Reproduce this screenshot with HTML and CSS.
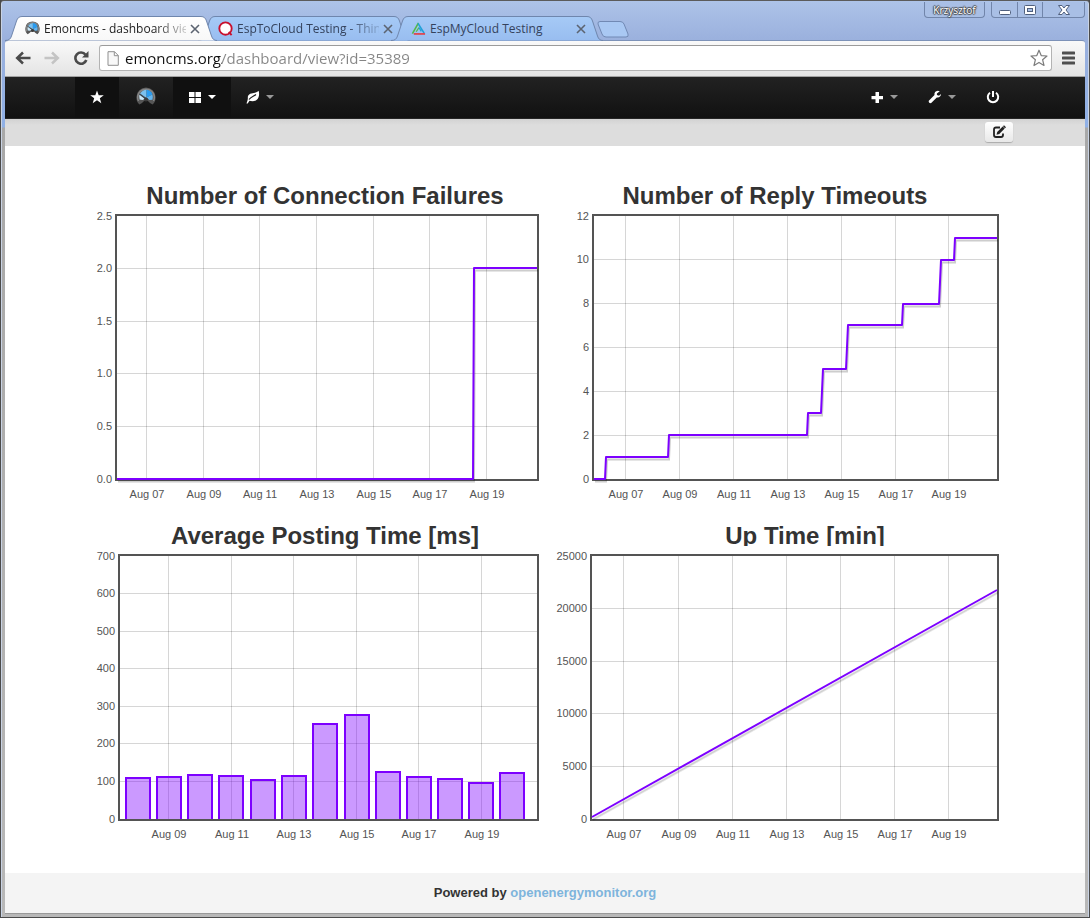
FILE: index.html
```html
<!DOCTYPE html>
<html lang="en">
<head>
<meta charset="utf-8">
<title>Emoncms - dashboard view</title>
<link rel="stylesheet" href="styles.css">
<script src="charts.js" defer></script>
</head>
<body>
<svg class="defs" aria-hidden="true">
  <defs>
    <linearGradient id="tab-on" x1="0" y1="0" x2="0" y2="1"><stop offset="0" stop-color="#fff"/><stop offset="1" stop-color="#f8f8f8"/></linearGradient>
    <linearGradient id="tab-off" x1="0" y1="0" x2="0" y2="1"><stop offset="0" stop-color="#a6caf6"/><stop offset="1" stop-color="#98bdf0"/></linearGradient>
    <symbol id="logo" viewBox="0 0 20 20">
      <path d="M3.500 17.500Q0 14.500 .500 9.500A9.500 9 0 0 1 19.500 9.500Q20 14.500 16.500 17.500L14 16Q12.500 13.500 10 13.500Q7.500 13.500 6 16Z" fill="#555"/>
      <path d="M2.500 14A8.300 8.300 0 1 1 17.500 14" fill="none" stroke="#858585" stroke-width="1.500"/>
      <path d="M3.600 12.500A7 7 0 0 1 4 6.500L9.500 11.500L6.500 13Z" fill="#c8e6f7"/>
      <path d="M4 6.500Q6.500 3 10.500 2.800L10.500 11Z" fill="#7cc1ef"/>
      <path d="M10.500 2.800Q15 3.200 16.500 7.500L10.500 10.500Z" fill="#2a9cf0"/>
      <path d="M16.500 7.500Q17.200 10 16.500 12.800L13.500 13L10.500 10.500Z" fill="#63b4ee"/>
      <path d="M3.500 7L10 12" stroke="#303a44" stroke-width="1.100"/>
      <circle cx="10" cy="12.500" r="2" fill="#3a3a3a"/>
    </symbol>
    <symbol id="caret" viewBox="0 0 8 4"><path d="M0 0h8L4 4Z" fill="currentColor"/></symbol>
    <symbol id="close" viewBox="0 0 10 10"><path d="M1 1l8 8M9 1L1 9" stroke="currentColor" stroke-width="1.600" fill="none"/></symbol>
    <symbol id="tab-shape" viewBox="0 0 212 25">
      <path d="M0 24.500C4 24.500 5.500 23 6.500 20L11.500 5C12.500 2 14 .5 17 .5H196C199 .5 200.500 2 201.500 5L206.500 20C207.500 23 209 24.500 212 24.500" stroke="#6f86ad"/>
    </symbol>
  </defs>
</svg>

<div class="window">
  <header class="titlebar">
    <nav class="tabs" aria-label="Open tabs">
      <div class="tab tab-active">
        <svg class="tab-bg" fill="url(#tab-on)"><use href="#tab-shape"/></svg>
        <svg class="favicon"><use href="#logo"/></svg>
        <span class="tab-title tab-fade">Emoncms - dashboard view</span>
        <button class="tab-close" aria-label="Close tab"><svg><use href="#close"/></svg></button>
      </div>
      <div class="tab">
        <svg class="tab-bg" fill="url(#tab-off)"><use href="#tab-shape"/></svg>
        <svg class="favicon" viewBox="0 0 16 16"><circle cx="8" cy="8" r="6.600" fill="#fff" stroke="#c8102e" stroke-width="2"/><path d="M11.500 11.500l3 3.500" stroke="#c8102e" stroke-width="2"/></svg>
        <span class="tab-title tab-fade">EspToCloud Testing - Thin</span>
        <button class="tab-close" aria-label="Close tab"><svg><use href="#close"/></svg></button>
      </div>
      <div class="tab">
        <svg class="tab-bg" fill="url(#tab-off)"><use href="#tab-shape"/></svg>
        <svg class="favicon" viewBox="0 0 16 16" fill="none" stroke-width="1.700"><path d="M8 2L1.500 13.500" stroke="#54b848"/><path d="M7.500 2.500L14 13" stroke="#1fa0d8"/><path d="M3 13.800H15" stroke="#e8383d"/><path d="M8.500 7L5.500 11.500" stroke="#54b848" stroke-width="1.300"/><path d="M8.500 7l2.500 4" stroke="#1fa0d8" stroke-width="1.300"/></svg>
        <span class="tab-title">EspMyCloud Testing</span>
        <button class="tab-close" aria-label="Close tab"><svg><use href="#close"/></svg></button>
      </div>
      <button class="new-tab" aria-label="New tab"><svg viewBox="0 0 32 17"><path d="M3 .5H23Q26 .5 27 3L31 13Q32 16 29 16H9Q6 16 5 13L1 3Q.500 .500 3 .500Z" fill="#a9c8f3" stroke="#7189b4"/></svg></button>
    </nav>
    <div class="window-controls">
      <button class="user">Krzysztof</button>
      <div class="control-group">
        <button class="minimize" aria-label="Minimize"><svg viewBox="0 0 14 12"><rect x="1.500" y="6.500" width="11" height="4" rx="1" fill="#fff" stroke="#50607e"/></svg></button>
        <button class="maximize" aria-label="Maximize"><svg viewBox="0 0 14 12"><rect x="1.500" y="1.500" width="11" height="9" rx="1" fill="#fff" stroke="#50607e"/><rect x="4.500" y="4.500" width="5" height="3" fill="#a9c0e6" stroke="#50607e"/></svg></button>
        <button class="close" aria-label="Close"><svg viewBox="0 0 14 12"><path d="M1.500 1.500h3.500L7 4l2-2.500h3.500L9 6l3.500 4.500H9L7 8l-2 2.500H1.500L5 6Z" fill="#fff" stroke="#50607e"/></svg></button>
      </div>
    </div>
  </header>

  <div class="toolbar">
    <button class="tool" aria-label="Back"><svg viewBox="0 0 16 14"><path d="M15.500 7H2.500M8 1.500L2.200 7L8 12.500" fill="none" stroke="#4a4a4a" stroke-width="2.500"/></svg></button>
    <button class="tool" aria-label="Forward"><svg viewBox="0 0 16 14"><path d="M.500 7H13.500M8 1.500L13.800 7L8 12.500" fill="none" stroke="#c4c4c4" stroke-width="2.500"/></svg></button>
    <button class="tool" aria-label="Reload"><svg viewBox="0 0 16 14"><path d="M12.500 3.800A5.600 5.600 0 1 0 13.300 9" fill="none" stroke="#4a4a4a" stroke-width="2.600"/><path d="M15.500 0V6.500H9Z" fill="#4a4a4a"/></svg></button>
    <div class="omnibox">
      <svg class="page-icon" viewBox="0 0 12 15"><path d="M1 .700H7.500L11.300 4.500V14.300H1ZM7.300 .700V4.700H11.300" fill="#f8f8f8" stroke="#8f8f8f"/></svg>
      <input class="url" type="text" aria-label="Address" value="emoncms.org/dashboard/view?id=35389">
      <button class="bookmark" aria-label="Bookmark this page"><svg viewBox="0 0 18 18"><path d="M9 1.200L11.200 6.600L17 7L12.600 10.700L14 16.500L9 13.400L4 16.500L5.400 10.700L1 7L6.800 6.600Z" fill="#fff" stroke="#7c7c7c" stroke-width="1.200" stroke-linejoin="round"/></svg></button>
    </div>
    <button class="menu" aria-label="Menu"><svg viewBox="0 0 13 14"><path d="M1 2H12M1 7H12M1 12H12" stroke="#4f4f4f" stroke-width="3" stroke-linecap="round"/></svg></button>
  </div>

  <div class="page">
    <nav class="navbar" aria-label="Main">
      <ul class="container nav">
        <li><a class="nav-on" href="#" aria-label="Favourites"><svg class="glyph" viewBox="0 0 14 14"><path d="M7 .500L8.700 5.200H13.800L9.800 8.200L11.300 13.200L7 10.200L2.700 13.200L4.200 8.200L.200 5.200H5.300Z" fill="currentColor"/></svg></a></li>
        <li><a class="nav-logo" href="#" aria-label="Emoncms"><svg><use href="#logo"/></svg></a></li>
        <li><a class="nav-on" href="#" aria-label="Dashboards"><svg class="glyph" viewBox="0 0 14 14"><path d="M1 2H6.500V7H1ZM7.500 2H13V7H7.500ZM1 8H6.500V13H1ZM7.500 8H13V13H7.500Z" fill="currentColor"/></svg><svg class="caret"><use href="#caret"/></svg></a></li>
        <li><a href="#" aria-label="Extra"><svg class="glyph" viewBox="0 0 14 14"><path d="M.500 13.500C1.500 10.500 2 9 1.800 7.500C1.800 3.500 6 3.500 9 2.800C11 2.300 12 1.500 12.600 .800C13.700 4 13 8 10.500 10C8.500 11.500 5.500 11.300 3.500 10.800L1.700 13.500Z" fill="currentColor"/><path d="M3 9.500C5 6.500 7.500 6.500 10 4.500" fill="none" stroke="#1b1b1b" stroke-width="1.200"/></svg><svg class="caret"><use href="#caret"/></svg></a></li>
        <li class="nav-right"><a href="#" aria-label="Setup"><svg class="glyph" viewBox="0 0 14 14"><path d="M5.500 2H9V6H13V9.200H9V13H5.500V9.200H1.500V6H5.500Z" fill="currentColor"/></svg><svg class="caret"><use href="#caret"/></svg></a></li>
        <li><a href="#" aria-label="Tools"><svg class="glyph" viewBox="0 0 14 14"><path d="M11.800 1.200L9.800 .700C7.500 .800 6 2.800 6.500 5L.800 10.700C.200 12 1.800 13.700 3.200 13.100L8.800 7.500C11 8 13 6.500 13 4L11 5.800L8.900 5V3.400Z" fill="currentColor"/></svg><svg class="caret"><use href="#caret"/></svg></a></li>
        <li><a href="#" aria-label="Log out"><svg class="glyph" viewBox="0 0 14 14"><path d="M4 2.800A5.200 5.200 0 1 0 10 2.800M7 1V7" fill="none" stroke="currentColor" stroke-width="2"/></svg></a></li>
      </ul>
    </nav>
    <div class="subnav">
      <div class="container subnav-inner">
        <button class="edit" aria-label="Edit dashboard"><svg viewBox="0 0 14 14"><path d="M8 2.500H4Q2 2.500 2 4.500V10Q2 12 4 12H9Q11 12 11 10V8.500" fill="none" stroke="#222" stroke-width="1.800"/><path d="M4.500 9.800L5.200 7L10.700 1.500L12.700 3.400L7.300 8.900Z" fill="#222"/><path d="M11.500 .800L13.500 2.700" stroke="#222" stroke-width="1.400"/></svg></button>
      </div>
    </div>

    <main class="container dashboard">
      <figure class="chart">
        <h2>Number of Connection Failures</h2>
        <svg id="failures" viewBox="100 211 450 310" role="img" aria-label="Number of Connection Failures"></svg>
      </figure>
      <figure class="chart">
        <h2>Number of Reply Timeouts</h2>
        <svg id="timeouts" viewBox="550 211 450 310" role="img" aria-label="Number of Reply Timeouts"></svg>
      </figure>
      <figure class="chart">
        <h2>Average Posting Time [ms]</h2>
        <svg id="posting" viewBox="100 551 450 310" role="img" aria-label="Average Posting Time"></svg>
      </figure>
      <figure class="chart">
        <h2 class="title-short">Up Time [min]</h2>
        <svg id="uptime" viewBox="550 551 450 310" role="img" aria-label="Up Time"></svg>
      </figure>
    </main>

    <footer class="footer">Powered by <a href="#">openenergymonitor.org</a></footer>
  </div>
</div>
</body>
</html>
```

FILE: styles.css
```css
* { box-sizing: border-box; }
body { margin: 0; background: #4a4a4a; font: 13px/20px "Liberation Sans", Arial, sans-serif; color: #333; }
button { border: 0; padding: 0; background: none; font: inherit; color: inherit; display: flex; align-items: center; justify-content: center; }
svg { display: block; }
.defs { position: absolute; width: 0; height: 0; }

.window {
  min-height: 100vh;
  display: flex;
  flex-direction: column;
  padding: 1px 4px 4px;
  border: 1px solid #4b4b4b;
  border-top-color: #5b5b5b;
  border-radius: 4px 4px 0 0;
  background: linear-gradient(#adc3e8 0, #9ab0dd 40px, #8fb0e6 126px, #a8a8a8 127px, #b8b8b8);
  box-shadow: inset 1px 0 #c9d3e4, inset -1px 0 #c9d3e4;
}

.titlebar { height: 38px; display: flex; justify-content: space-between; align-items: flex-start; font: 12px/16px "Open Sans", "Noto Sans", sans-serif; }
.tabs { display: flex; padding-top: 14px; min-width: 0; }
.tab { position: relative; width: 212px; height: 25px; padding: 0 17px 0 20px; display: flex; align-items: center; gap: 4px; color: #34425c; }
.tab + .tab { margin-left: -19px; }
.tab-active { z-index: 1; color: #222; }
.tab-bg { position: absolute; inset: 0; width: 100%; height: 100%; z-index: -1; }
.tab:not(.tab-active) { z-index: 0; }
.favicon { width: 15px; height: 15px; flex: none; }
.tab-title { flex: 1; white-space: nowrap; overflow: hidden; }
.tab-fade { mask-image: linear-gradient(to right, #000 110px, #0003 142px); }
.tab-close { width: 10px; height: 10px; flex: none; color: #5c6471; }
.tab-close svg { width: 10px; height: 10px; }
.new-tab { width: 32px; height: 17px; margin: 5px 0 0 -6px; }
.new-tab svg { width: 32px; height: 17px; }
.window-controls { display: flex; gap: 6px; }
.user, .control-group { height: 16px; border: 1px solid #7185aa; border-top: 0; border-radius: 0 0 4px 4px; background: #a9bfe5; }
.user { width: 61px; font-size: 10px; line-height: 14px; color: #fff; text-shadow: 1px 0 1px #444, -1px 0 1px #444, 0 1px 1px #444, 0 -1px 1px #444; }
.control-group { display: flex; }
.control-group button { width: 25px; }
.control-group button + button { border-left: 1px solid #7185aa; }
.control-group .close { width: 42px; }
.control-group svg { width: 14px; height: 12px; }

.toolbar { height: 37px; display: flex; align-items: center; padding: 0 10px 1px; background: linear-gradient(#f9f9f9, #e4e4e4); border-top: 1px solid #7d92b8; border-bottom: 1px solid #a2a2a2; border-radius: 3px 3px 0 0; }
.tab-active { margin-bottom: -1px; }
.tool { width: 29px; height: 20px; justify-content: flex-start; }
.tool svg { width: 16px; height: 14px; }
.omnibox { flex: 1; height: 26px; margin-left: -3px; display: flex; align-items: center; padding: 0 3px 0 7px; background: #fff; border: 1px solid #b3b3b3; border-top-color: #9b9b9b; border-radius: 3px; }
.page-icon { width: 12px; height: 15px; }
.url {
  flex: 1; min-width: 0; height: 22px; padding: 0; margin-left: 6px; border: 0; outline: 0;
  font: 15px/22px "Open Sans", "Noto Sans", sans-serif;
  color: transparent;
  background: linear-gradient(to right, #111 97px, #858585 97px);
  background-clip: text;
  -webkit-background-clip: text;
}
.bookmark, .bookmark svg { width: 18px; height: 18px; }
.menu { margin-left: 10px; }
.menu svg { width: 13px; height: 14px; }

.page { flex: 1; display: flex; flex-direction: column; background: #fff; }
.container { width: 100%; max-width: 940px; margin: 0 auto; }
.navbar { background: linear-gradient(#222, #111); border-bottom: 1px solid #252525; }
.nav { display: flex; padding: 0; list-style: none; }
.nav a { height: 41px; padding: 0 15px 1px; display: flex; align-items: center; gap: 6px; color: #fff; }
.nav .nav-on { background: #101010; }
.nav .nav-logo { padding: 0 17px 1px; }
.nav-logo svg { width: 20px; height: 20px; }
.nav-right { margin-left: auto; }
.glyph { width: 14px; height: 14px; }
.caret { width: 8px; height: 4px; color: #999; }
.nav-on .caret { color: #fff; }
.subnav { height: 27px; background: linear-gradient(#d2d2d2, #ddd 6px); }
.subnav-inner { display: flex; justify-content: flex-end; padding: 3px 2px; }
.edit { width: 28px; height: 20px; border-radius: 3px; background: linear-gradient(#fff, #e8e8e8); box-shadow: 0 1px 1px #aaa; }
.edit svg { width: 14px; height: 14px; }

.dashboard { flex: 1; display: grid; grid-template-columns: 1fr 1fr; align-content: start; padding: 35px 15px 12px 25px; }
.chart { margin: 0; min-width: 0; }
.chart h2 { margin: 0; height: 30px; font-size: 24px; line-height: 30px; text-align: center; }
.chart .title-short { height: 25px; margin-bottom: 5px; padding-left: 60px; overflow: hidden; }
.chart svg { width: 100%; height: auto; overflow: visible; font-size: 11px; fill: #545454; }
.chart .grid { stroke: #000; stroke-opacity: .16; }
.chart .frame { fill: none; stroke: #545454; stroke-width: 2; }
.chart .line { fill: none; stroke: #7d00ff; stroke-width: 2; stroke-linejoin: round; }
.chart .shadow { fill: none; stroke: #000; stroke-opacity: .1; stroke-width: 2; }
.chart .bar { fill: #7d00ff; fill-opacity: .4; stroke: #7d00ff; stroke-width: 2; }

.footer { height: 40px; padding: 10px 0; background: #f4f4f4; text-align: center; font-weight: bold; box-shadow: 0 1px #999; }
.footer a { color: #7eb4dc; text-decoration: none; }
```

FILE: charts.js
```js
const NS = "http://www.w3.org/2000/svg";

function add(svg, name, attrs, text) {
  const el = document.createElementNS(NS, name);
  for (const key in attrs) el.setAttribute(key, attrs[key]);
  if (text !== undefined) el.textContent = text;
  svg.appendChild(el);
}

function draw(id, c) {
  const svg = document.getElementById(id);
  const bottom = c.top + 265;
  c.xs.forEach((x, i) => {
    add(svg, "path", { class: "grid", d: `M${x + 0.5} ${c.top}V${bottom}` });
    add(svg, "text", { x: x + 1, y: bottom + 18, "text-anchor": "middle" }, c.days[i]);
  });
  c.ys.forEach((label, i) => {
    const y = Math.floor(bottom - 1 - i * 263 / (c.ys.length - 1));
    if (i > 0 && i < c.ys.length - 1) add(svg, "path", { class: "grid", d: `M${c.left} ${y + 0.5}H${c.right}` });
    add(svg, "text", { x: c.left - 4, y: y + 4, "text-anchor": "end" }, label);
  });
  add(svg, "rect", { class: "frame", x: c.left, y: c.top, width: c.right - c.left, height: 265 });
  if (c.line) {
    add(svg, "path", { class: "shadow", d: c.line, transform: "translate(1 3)" });
    add(svg, "path", { class: "shadow", d: c.line, transform: "translate(1 2)" });
    add(svg, "path", { class: "line", d: c.line });
  }
  (c.bars || []).forEach(([x, y]) => {
    add(svg, "path", { class: "bar", d: `M${x} ${bottom - 1}V${y}H${x + 24}V${bottom - 1}` });
  });
}

const days = ["Aug 07", "Aug 09", "Aug 11", "Aug 13", "Aug 15", "Aug 17", "Aug 19"];

draw("failures", {
  left: 116, right: 538, top: 215, days,
  xs: [146, 203, 259, 316, 373, 429, 486],
  ys: ["0.0", "0.5", "1.0", "1.5", "2.0", "2.5"],
  line: "M117 479H473L474 268H537"
});
draw("timeouts", {
  left: 593, right: 998, top: 215, days,
  xs: [625, 679, 733, 787, 841, 895, 948],
  ys: ["0", "2", "4", "6", "8", "10", "12"],
  line: "M594 479H605L606 457H668L669 435H807L808 413H821L823 369H846L848 325H902L903 304H939L941 260H954L955 238H997"
});
draw("posting", {
  left: 119, right: 538, top: 555, days: days.slice(1),
  xs: [168, 231, 293, 356, 418, 481],
  ys: ["0", "100", "200", "300", "400", "500", "600", "700"],
  bars: [[126, 778], [157, 777], [188, 775], [219, 776], [251, 780], [282, 776], [313, 724], [345, 715], [376, 772], [407, 777], [438, 779], [469, 783], [500, 773]]
});
draw("uptime", {
  left: 591, right: 998, top: 555, days,
  xs: [623, 678, 732, 786, 840, 894, 948],
  ys: ["0", "5000", "10000", "15000", "20000", "25000"],
  line: "M592 817L997 590"
});
```
